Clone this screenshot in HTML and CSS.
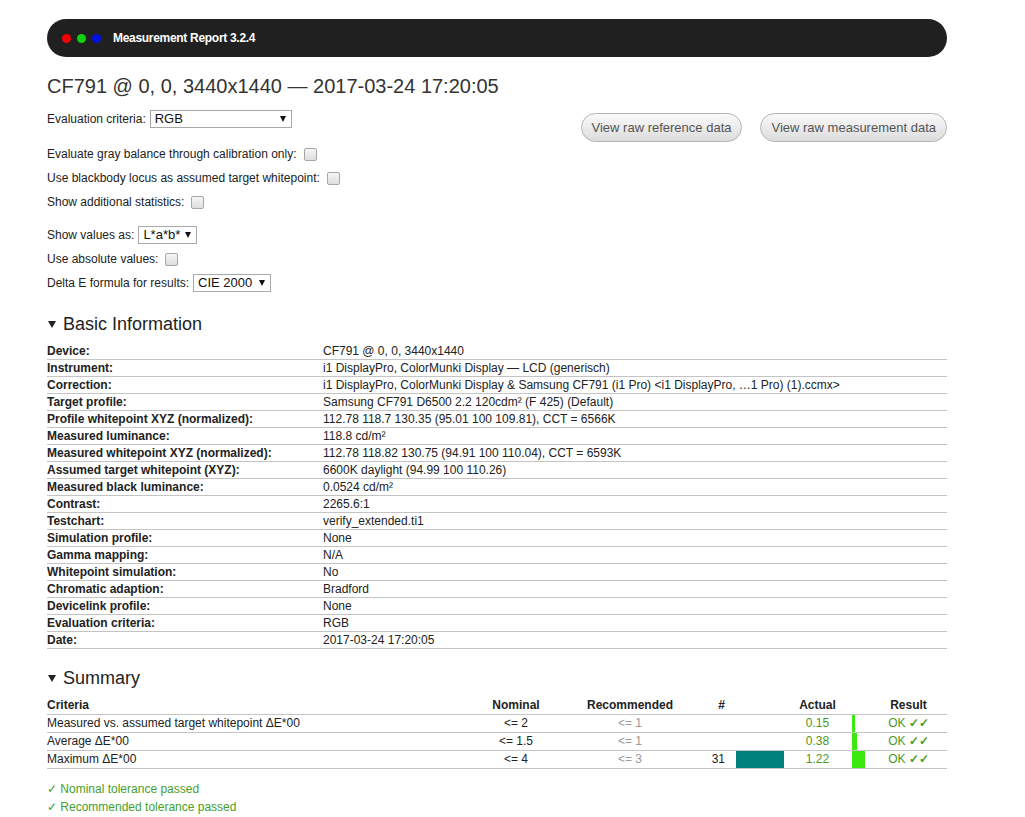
FILE: index.html
```html
<!DOCTYPE html>
<html lang="en">
<head>
    <meta charset="UTF-8">
    <title>Measurement Report 3.2.4</title>
    <link rel="stylesheet" href="styles.css">
</head>
<body>
<div class="page">
    <div class="titlebar">
        <span class="dot red"></span>
        <span class="dot green"></span>
        <span class="dot blue"></span>
        <span class="app-title">Measurement Report 3.2.4</span>
    </div>

    <h1>CF791 @ 0, 0, 3440x1440 — 2017-03-24 17:20:05</h1>

    <div class="top">
        <div class="field">
            <label for="criteria">Evaluation criteria:</label>
            <span class="select criteria"><select id="criteria"><option>RGB</option></select></span>
        </div>
        <div class="buttons">
            <button type="button" class="btn">View raw reference data</button>
            <button type="button" class="btn">View raw measurement data</button>
        </div>
    </div>

    <div class="group first">
        <div class="field"><label for="gray">Evaluate gray balance through calibration only:</label><input type="checkbox" id="gray"></div>
        <div class="field"><label for="blackbody">Use blackbody locus as assumed target whitepoint:</label><input type="checkbox" id="blackbody"></div>
        <div class="field"><label for="stats">Show additional statistics:</label><input type="checkbox" id="stats"></div>
    </div>

    <div class="group second">
        <div class="field">
            <label for="values">Show values as:</label>
            <span class="select lab"><select id="values"><option>L*a*b*</option></select></span>
        </div>
        <div class="field"><label for="absolute">Use absolute values:</label><input type="checkbox" id="absolute"></div>
        <div class="field">
            <label for="formula">Delta E formula for results:</label>
            <span class="select cie"><select id="formula"><option>CIE 2000</option></select></span>
        </div>
    </div>

    <h2><span class="toggle"></span>Basic Information</h2>
    <table class="info">
        <tr><th>Device:</th><td>CF791 @ 0, 0, 3440x1440</td></tr>
        <tr><th>Instrument:</th><td>i1 DisplayPro, ColorMunki Display — LCD (generisch)</td></tr>
        <tr><th>Correction:</th><td>i1 DisplayPro, ColorMunki Display &amp; Samsung CF791 (i1 Pro) &lt;i1 DisplayPro, …1 Pro) (1).ccmx&gt;</td></tr>
        <tr><th>Target profile:</th><td>Samsung CF791 D6500 2.2 120cdm² (F 425) (Default)</td></tr>
        <tr><th>Profile whitepoint XYZ (normalized):</th><td>112.78 118.7 130.35 (95.01 100 109.81), CCT = 6566K</td></tr>
        <tr><th>Measured luminance:</th><td>118.8 cd/m²</td></tr>
        <tr><th>Measured whitepoint XYZ (normalized):</th><td>112.78 118.82 130.75 (94.91 100 110.04), CCT = 6593K</td></tr>
        <tr><th>Assumed target whitepoint (XYZ):</th><td>6600K daylight (94.99 100 110.26)</td></tr>
        <tr><th>Measured black luminance:</th><td>0.0524 cd/m²</td></tr>
        <tr><th>Contrast:</th><td>2265.6:1</td></tr>
        <tr><th>Testchart:</th><td>verify_extended.ti1</td></tr>
        <tr><th>Simulation profile:</th><td>None</td></tr>
        <tr><th>Gamma mapping:</th><td>N/A</td></tr>
        <tr><th>Whitepoint simulation:</th><td>No</td></tr>
        <tr><th>Chromatic adaption:</th><td>Bradford</td></tr>
        <tr><th>Devicelink profile:</th><td>None</td></tr>
        <tr><th>Evaluation criteria:</th><td>RGB</td></tr>
        <tr><th>Date:</th><td>2017-03-24 17:20:05</td></tr>
    </table>

    <h2><span class="toggle"></span>Summary</h2>
    <table class="summary">
        <colgroup>
            <col class="c-criteria"><col class="c-nominal"><col class="c-recommended"><col class="c-count">
            <col class="c-countbar"><col class="c-actual"><col class="c-actualbar"><col class="c-result">
        </colgroup>
        <tr>
            <th class="left">Criteria</th><th>Nominal</th><th>Recommended</th><th class="count">#</th>
            <th></th><th>Actual</th><th></th><th>Result</th>
        </tr>
        <tr>
            <td class="left">Measured vs. assumed target whitepoint ΔE*00</td><td>&lt;= 2</td><td class="rec">&lt;= 1</td><td class="count"></td>
            <td></td><td class="ok">0.15</td><td class="barcell"><div class="bar good" style="width:3px"></div></td><td class="ok">OK <span class="tick">✓✓</span></td>
        </tr>
        <tr>
            <td class="left">Average ΔE*00</td><td>&lt;= 1.5</td><td class="rec">&lt;= 1</td><td class="count"></td>
            <td></td><td class="ok">0.38</td><td class="barcell"><div class="bar good" style="width:5px"></div></td><td class="ok">OK <span class="tick">✓✓</span></td>
        </tr>
        <tr>
            <td class="left">Maximum ΔE*00</td><td>&lt;= 4</td><td class="rec">&lt;= 3</td><td class="count">31</td>
            <td class="barcell"><div class="bar teal" style="width:48px"></div></td><td class="ok">1.22</td><td class="barcell"><div class="bar good" style="width:13px"></div></td><td class="ok">OK <span class="tick">✓✓</span></td>
        </tr>
    </table>

    <p class="passed first-pass">✓ Nominal tolerance passed</p>
    <p class="passed">✓ Recommended tolerance passed</p>
</div>
</body>
</html>
```

FILE: styles.css
```css
body {
    margin: 0;
    background: #fff;
    color: #222;
    font-family: 'Liberation Sans', Arial, sans-serif;
    font-size: 12px;
}
.page {
    width: 900px;
    margin-left: 47px;
    padding-top: 19px;
}
.titlebar {
    display: flex;
    align-items: center;
    height: 38px;
    padding-left: 15px;
    background: #202020;
    border-radius: 19px;
}
.dot {
    width: 9px;
    height: 9px;
    border-radius: 50%;
    margin-right: 6px;
}
.red { background: #f00000; }
.green { background: #10d010; }
.blue { background: #0010e0; }
.app-title {
    margin-left: 6px;
    color: #fff;
    font-weight: bold;
    font-size: 12px;
    letter-spacing: -0.3px;
}
h1 {
    margin: 17px 0 9px;
    font-size: 20px;
    line-height: 24px;
    font-weight: normal;
    color: #333;
}
.top {
    display: flex;
    justify-content: space-between;
    align-items: flex-start;
    height: 24px;
}
.buttons {
    display: flex;
    gap: 18px;
    margin-top: 6px;
}
.btn {
    height: 29px;
    padding: 0 10px;
    border: 1px solid #b4b4b4;
    border-radius: 15px;
    background: linear-gradient(#fafafa, #dcdcdc);
    color: #555;
    font-family: 'Liberation Sans', Arial, sans-serif;
    font-size: 13px;
    cursor: pointer;
}
.field {
    display: flex;
    align-items: center;
    height: 24px;
}
.group.first { margin-top: 11px; }
.group.second { margin-top: 9px; }
.field input[type=checkbox] {
    appearance: none;
    -webkit-appearance: none;
    width: 13px;
    height: 13px;
    margin: 0 0 0 7px;
    border: 1px solid #a6a6a6;
    border-radius: 2px;
    background: linear-gradient(#f6f6f6, #dedede);
}
.select {
    position: relative;
    margin-left: 4px;
}
.select select {
    appearance: none;
    -webkit-appearance: none;
    width: 100%;
    height: 18px;
    padding: 0 0 0 4px;
    border: 1px solid #a9a9a9;
    border-radius: 0;
    background: #fff;
    color: #111;
    font-family: 'Liberation Sans', Arial, sans-serif;
    font-size: 13px;
    line-height: 16px;
}
.select::after {
    content: "";
    position: absolute;
    right: 6px;
    top: 6px;
    border-left: 3px solid transparent;
    border-right: 3px solid transparent;
    border-top: 6px solid #111;
    pointer-events: none;
}
.select.criteria { width: 142px; }
.select.lab { width: 59px; }
.select.cie { width: 78px; }
h2 {
    margin: 18px 0 8px;
    font-size: 18px;
    line-height: 22px;
    font-weight: normal;
    color: #222;
}
.toggle {
    display: inline-block;
    margin: 0 7px 2px 1px;
    vertical-align: middle;
    border-left: 4px solid transparent;
    border-right: 4px solid transparent;
    border-top: 7px solid #222;
}
table {
    width: 100%;
    border-collapse: collapse;
    table-layout: fixed;
}
.info th, .info td {
    padding: 0;
    height: 16px;
    line-height: 16px;
    border-bottom: 1px solid #c4c4c4;
    text-align: left;
    white-space: nowrap;
    overflow: hidden;
}
.info th {
    width: 276px;
    font-weight: bold;
}
.summary th, .summary td {
    padding: 0;
    height: 17px;
    line-height: 17px;
    border-bottom: 1px solid #c4c4c4;
    text-align: center;
    white-space: nowrap;
}
.summary th { font-weight: bold; }
.summary .left { text-align: left; }
.summary .count {
    text-align: right;
    padding-right: 10px;
}
.c-criteria { width: 413px; }
.c-nominal { width: 112px; }
.c-recommended { width: 116px; }
.c-count { width: 47px; }
.c-countbar { width: 50px; }
.c-actual { width: 65px; }
.c-actualbar { width: 20px; }
.c-result { width: 77px; }
.summary .rec { color: #999; }
.summary .ok { color: #4b9a22; }
.tick { font-weight: bold; }
.barcell { vertical-align: top; }
.bar {
    height: 17px;
    margin-left: 1px;
}
.bar.teal { background: #00807a; }
.bar.good { background: #3be80f; margin-left: 2px; }
.passed {
    margin: 0;
    line-height: 18px;
    color: #46a02a;
}
.passed.first-pass { margin-top: 11px; }
```
